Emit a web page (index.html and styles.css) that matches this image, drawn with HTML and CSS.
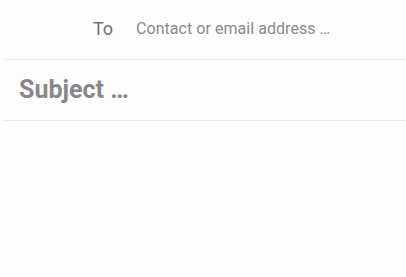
FILE: index.html
```html
<!DOCTYPE html>
<html>
<head>
<meta charset="utf-8">
<link rel="stylesheet" href="styles.css">
</head>
<body>
<div class="composer">
  <div class="row to-row">
    <span class="to-label">To</span>
    <span class="to-input">Contact or email address …</span>
  </div>
  <div class="row subject-row">
    <span class="subject">Subject …</span>
  </div>
  <div class="body-area"></div>
</div>
</body>
</html>
```
FILE: styles.css
```css
html, body {
  margin: 0;
  padding: 0;
  background: #fefdfe;
  font-family: Roboto, "Liberation Sans", sans-serif;
}
.composer {
  margin-left: 3px;
  width: 403px;
  height: 277px;
  display: flex;
  flex-direction: column;
}
.row {
  display: flex;
  align-items: center;
  border-bottom: 1px solid #e8e7ea;
}
.to-row {
  height: 57px;
  padding-left: 90px;
  padding-bottom: 2px;
}
.to-label {
  font-size: 18px;
  color: #737376;
  width: 43px;
}
.to-input {
  font-size: 16px;
  color: #8a8a8e;
  letter-spacing: 0.05px;
}
.subject-row {
  height: 58px;
  padding-left: 16px;
  padding-bottom: 2px;
}
.subject {
  font-size: 25px;
  font-weight: 700;
  color: #88878b;
}
.body-area {
  flex: 1;
}
```
